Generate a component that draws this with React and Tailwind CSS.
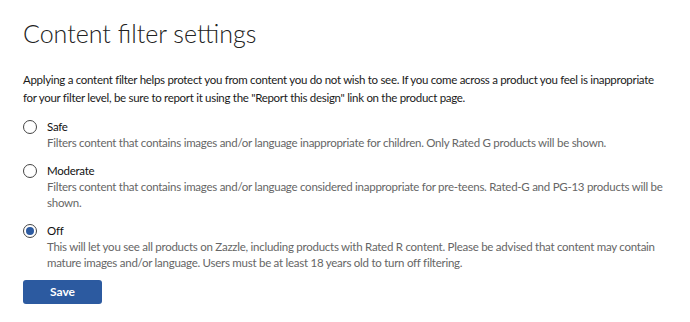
import { useState } from "react";

const OPTIONS = [
  {
    id: "safe",
    label: "Safe",
    desc: "Filters content that contains images and/or language inappropriate for children. Only Rated G products will be shown.",
  },
  {
    id: "moderate",
    label: "Moderate",
    desc: "Filters content that contains images and/or language considered inappropriate for pre-teens. Rated-G and PG-13 products will be shown.",
  },
  {
    id: "off",
    label: "Off",
    desc: "This will let you see all products on Zazzle, including products with Rated R content. Please be advised that content may contain mature images and/or language. Users must be at least 18 years old to turn off filtering.",
  },
];

export default function App() {
  const [level, setLevel] = useState("off");

  return (
    <div className="min-h-[322px] bg-white px-[23px] pt-[18px] font-['Lato',sans-serif] text-[#222]">
      <h1 className="text-[25px] font-light leading-[30px] text-[#222]">Content filter settings</h1>

      <p className="mt-[23px] text-[11.5px] leading-[18px] tracking-[-0.3px] text-[#1a1a1a]">
        Applying a content filter helps protect you from content you do not wish to see. If you come across a
        product you feel is inappropriate for your filter level, be sure to report it using the "Report this
        design" link on the product page.
      </p>

      <div className="mt-[12px] flex flex-col gap-[11px]">
        {OPTIONS.map((opt) => (
          <div
            key={opt.id}
            onClick={() => setLevel(opt.id)}
            className="flex cursor-pointer items-start gap-[10px]"
          >
            <span className="mt-[1px] flex h-[14px] w-[14px] shrink-0 items-center justify-center rounded-full border border-[#444] bg-white">
              {level === opt.id && <span className="h-[8px] w-[8px] rounded-full bg-[#2c5aa0]" />}
            </span>
            <div className="text-[11.5px] tracking-[-0.26px]">
              <p className="leading-[16px] text-[#111]">{opt.label}</p>
              <p className="leading-[16.5px] text-[#666]">{opt.desc}</p>
            </div>
          </div>
        ))}
      </div>

      <button
        type="button"
        className="mt-[8px] h-[24px] w-[79px] rounded-[3px] bg-[#2c5aa0] text-[12px] font-bold text-white"
      >
        Save
      </button>
    </div>
  );
}
